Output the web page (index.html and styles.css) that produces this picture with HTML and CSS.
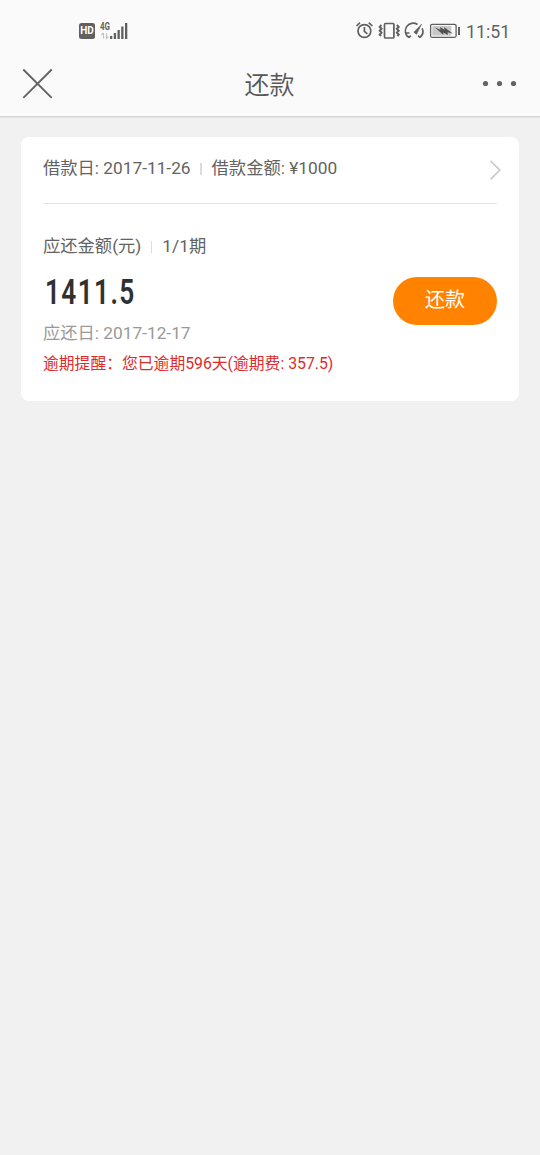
FILE: index.html
```html
<!DOCTYPE html>
<html lang="zh-CN">
<head>
<meta charset="utf-8">
<title>还款</title>
<link rel="stylesheet" href="styles.css">
</head>
<body>
<header class="top">
  <div class="status">
    <div class="status-left">
      <span class="hd">HD</span>
      <span class="signal">
        <span class="net">4G</span>
        <svg class="bars" width="29" height="20" viewBox="0 0 29 20">
          <path d="M3.500 13v5.500M1.500 15l2-2M6.500 13v5.500l2-2" fill="none" stroke="#c4c4c4" stroke-width="1.200"/>
          <path d="M10 16h2.300v3H10zM13.800 13h2.300v6h-2.300zM17.500 10h2.300v9h-2.300zM21.200 6.500h2.300V19h-2.300zM25 3h2.300v16H25z" fill="#606060"/>
        </svg>
      </span>
    </div>
    <div class="status-right">
      <svg width="106" height="20" viewBox="0 0 106 20" fill="none" stroke="#606060" stroke-width="1.700">
        <circle cx="9.400" cy="11" r="6.400"/>
        <path d="M9.400 7v4.300l3 2.500M1.500 6l3.500-3.300M13.800 2.700l3.500 3.300"/>
        <rect x="29.500" y="3.500" width="9.400" height="14.500" rx="1"/>
        <path d="M26.500 5l-1.800 1.900 1.800 1.900-1.800 1.900 1.800 1.900-1.800 1.900 1.300 1.500M41.900 5l1.800 1.900-1.800 1.900 1.800 1.900-1.800 1.900 1.800 1.900-1.300 1.500" stroke-width="2"/>
        <path d="M53.800 17.500a7.700 7.700 0 0 1 8.700-13M67.200 8.200a8 8 0 0 1-2.400 9.300M51.300 13h3.200M65 17.300l-2-1.700M53.800 17.500l2-1.800"/>
        <path d="M66.700 4l-5.200 10.400-2.700-2.200z" fill="#606060" stroke-width=".5"/>
        <rect x="75.600" y="4.300" width="25.500" height="13" rx="1.500" stroke-width="1.300"/>
        <path d="M77.300 6h19v9.600h-19z" fill="#c8c8c8" stroke="none"/>
        <path d="M80 7.500l5.500 2.200-.5-2.700 4.500 2.800-.4-2.800 8.500 6.400-5-1.200.3 2.800-4.700-2.600.2 2.600z" fill="#505050" stroke="none"/>
        <path d="M103 7h2v8h-2z" fill="#606060" stroke="none"/>
      </svg>
      <span class="clock">11:51</span>
    </div>
  </div>
  <div class="nav">
    <svg class="close" width="32" height="32" viewBox="0 0 32 32"><path d="M2.300 1.500l28.400 28.400M30.700 1.500L2.300 29.900" stroke="#636363" stroke-width="1.900"/></svg>
    <h1 class="title">还款</h1>
    <svg class="more" width="36" height="8" viewBox="0 0 36 8" fill="#636363"><circle cx="3.500" cy="3.500" r="2.600"/><circle cx="17.500" cy="3.500" r="2.600"/><circle cx="31.500" cy="3.500" r="2.600"/></svg>
  </div>
</header>
<main class="card">
  <div class="loan">
    <span>借款日: 2017-11-26</span><i class="sep"></i><span>借款金额: ¥1000</span>
    <svg class="arrow" width="13" height="22" viewBox="0 0 13 22"><path d="M1.500 1.800l9.300 9.300-9.300 9.300" fill="none" stroke="#cbcbcb" stroke-width="1.700"/></svg>
  </div>
  <div class="due">
    <div class="info">
      <div class="label"><span>应还金额(元)</span><i class="sep"></i><span>1/1期</span></div>
      <div class="amount">1411.5</div>
      <div class="date">应还日: 2017-12-17</div>
      <div class="warn">逾期提醒：您已逾期596天(逾期费: 357.5)</div>
    </div>
    <button class="pay">还款</button>
  </div>
</main>
</body>
</html>
```
FILE: styles.css
```css
* { box-sizing: border-box; }
body {
  margin: 0;
  min-height: 1155px;
  background: #f1f1f1;
  color: #636363;
  font-family: Roboto, "Noto Sans CJK SC", sans-serif;
  font-size: 17.3px;
}
svg { display: block; flex: none; }
.top {
  height: 117px;
  background: #fafafa;
  border-bottom: 1px solid #d4d4d4;
  box-shadow: 0 1px 1px #e6e6e6;
}
.status {
  height: 52px;
  padding: 20px 30px 0 79px;
  display: flex;
  justify-content: space-between;
}
.status-left, .status-right { display: flex; height: 20px; align-items: center; }
.hd {
  width: 16px;
  height: 16px;
  margin-top: 2px;
  border-radius: 2.5px;
  background: #606060;
  color: #fff;
  font: bold 10px/16px Roboto, sans-serif;
  text-align: center;
}
.signal { position: relative; margin-left: 5px; }
.net {
  position: absolute;
  left: 0;
  top: 2px;
  font: bold 10px/10px Roboto, sans-serif;
  transform: scaleX(.8);
  transform-origin: left;
}
.clock { margin: 4px 0 0 5px; font-size: 17.8px; line-height: 20px; width: 44px; white-space: nowrap; }
.nav {
  height: 64px;
  padding: 0 22px 0 21px;
  display: grid;
  grid-template-columns: 1fr auto 1fr;
  align-items: center;
}
.more { justify-self: end; }
.title { margin: 4px 0 0; font-size: 25px; font-weight: 350; line-height: 36px; color: #575757; }
.card {
  width: 498px;
  height: 264px;
  margin: 20px 0 0 21px;
  padding: 0 22px;
  background: #fff;
  border-radius: 8px;
}
.loan {
  display: flex;
  align-items: center;
  height: 67px;
  padding-bottom: 7px;
  border-bottom: 1.5px solid #e4e4e4;
  white-space: nowrap;
}
.sep { width: 1.5px; height: 12px; margin: 5px 10px 0 9.5px; background: #dcdcdc; }
.arrow { margin: 6px -5px 0 auto; }
.due { display: flex; justify-content: space-between; }
.info { padding-top: 27px; white-space: nowrap; }
.label { display: flex; align-items: center; height: 26px; }
.amount {
  height: 44px;
  margin: 14px 0 0 2px;
  font-size: 35px;
  font-weight: 600;
  line-height: 44px;
  letter-spacing: 1.8px;
  color: #303030;
  transform: scaleX(.75);
  transform-origin: left;
}
.date { height: 26px; line-height: 26px; margin-top: 5px; color: #999; }
.warn { height: 24px; line-height: 24px; margin-top: 6px; font-size: 15.8px; color: #dc2b2b; }
.pay {
  width: 104px;
  height: 48px;
  margin-top: 73px;
  padding: 0 0 3px;
  border: 0;
  border-radius: 24px;
  background: #ff8200;
  color: #fff;
  font: 20px/30px Roboto, "Noto Sans CJK SC", sans-serif;
}
```
